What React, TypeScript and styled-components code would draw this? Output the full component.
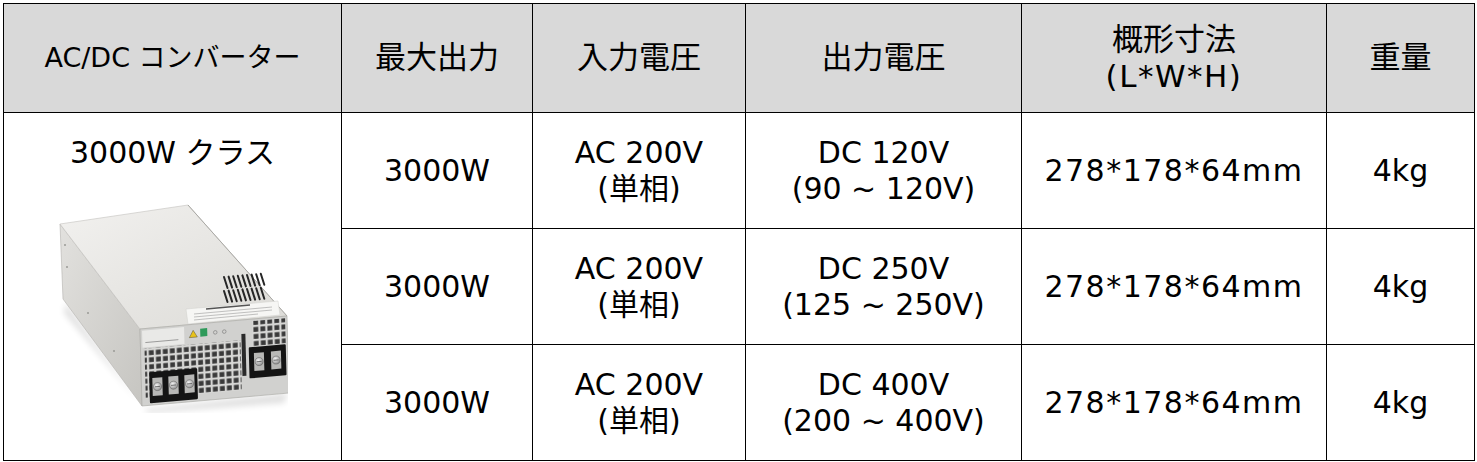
import styled, { createGlobalStyle } from 'styled-components';

const GlobalStyle = createGlobalStyle`
  html, body {
    margin: 0;
    background: #fff;
  }
  body {
    font-family: "DejaVu Sans", "Noto Sans CJK JP", sans-serif;
    color: #000;
  }
`;

const Page = styled.div`
  padding: 3px 0 0 3px;
`;

const Table = styled.table`
  border-collapse: collapse;
  table-layout: fixed;
  width: 1472px;
`;

const Col = styled.col<{ $w: number }>`
  width: ${(p) => p.$w}px;
`;

const Row = styled.tr<{ $h: number }>`
  height: ${(p) => p.$h}px;
`;

const HeadCell = styled.th<{ $size?: number }>`
  background: #d9d9d9;
  border: 1px solid #000;
  padding: 0;
  font-weight: normal;
  font-size: ${(p) => p.$size ?? 31}px;
  line-height: 1.2;
  text-align: center;
  vertical-align: middle;
`;

const Wide = styled.span`
  letter-spacing: 1.5px;
`;

const Cell = styled.td`
  border: 1px solid #000;
  padding: 0;
  font-size: 30px;
  line-height: 1.2;
  text-align: center;
  vertical-align: middle;
`;

const ProductCell = styled(Cell)`
  vertical-align: top;
  padding-top: 22px;
`;

const Caption = styled.div`
  white-space: nowrap;
`;

const ProductArt = styled.svg`
  display: block;
  margin: 32px auto 0;
`;

const vents = Array.from({ length: 9 }, (_, i) => i);

const PowerSupply = () => (
  <ProductArt width={230} height={210} viewBox="0 0 230 210">
    <defs>
      <linearGradient id="topFace" x1="0" y1="0" x2="1" y2="1">
        <stop offset="0" stopColor="#f2f1ef" />
        <stop offset="1" stopColor="#dcdbd7" />
      </linearGradient>
      <linearGradient id="sideFace" x1="0" y1="0" x2="1" y2="1">
        <stop offset="0" stopColor="#e2e1de" />
        <stop offset="1" stopColor="#c6c5c1" />
      </linearGradient>
      <radialGradient id="screw" cx="0.4" cy="0.35" r="0.7">
        <stop offset="0" stopColor="#f4f4f4" />
        <stop offset="1" stopColor="#8a8a8a" />
      </radialGradient>
      <pattern id="mesh" width="7" height="7" patternUnits="userSpaceOnUse">
        <rect width="7" height="7" fill="#d6d6d4" />
        <rect x="1.2" y="1.2" width="4.8" height="4.8" fill="#3a3a3a" />
      </pattern>
      <filter id="soft">
        <feGaussianBlur stdDeviation="3" />
      </filter>
    </defs>

    <polygon points="8,100 86,206 230,190 226,200 90,210 6,110" fill="#000" opacity="0.12" filter="url(#soft)" />

    {/* left side */}
    <polygon points="2,21 82,126 84,203 5,96" fill="url(#sideFace)" stroke="#b3b2ae" strokeWidth="0.6" />
    <circle cx="7" cy="42" r="1" fill="#9a9a96" />
    <circle cx="9" cy="64" r="1" fill="#9a9a96" />
    <circle cx="30" cy="110" r="1" fill="#9a9a96" />
    <circle cx="56" cy="148" r="1" fill="#9a9a96" />

    {/* top */}
    <polygon points="2,21 130,2 229,113 82,126" fill="url(#topFace)" stroke="#c2c1bd" strokeWidth="0.6" />
    <line x1="130" y1="2" x2="229" y2="113" stroke="#a9a8a4" strokeWidth="1" />

    {[0, 14].map((dy) =>
      vents.map((i) => (
        <line
          key={`${dy}-${i}`}
          x1={166 + i * 4.6}
          y1={74 + dy - i * 0.4}
          x2={169.5 + i * 4.6}
          y2={85 + dy - i * 0.4}
          stroke="#262626"
          strokeWidth="2"
          strokeLinecap="round"
        />
      ))
    )}

    {/* top label */}
    <polygon points="128,106 220,98 222,112 130,121" fill="#f6f6f4" stroke="#d0d0cc" strokeWidth="0.5" />
    <line x1="148" y1="106" x2="192" y2="102" stroke="#555" strokeWidth="1.6" />
    <line x1="136" y1="111" x2="214" y2="104" stroke="#9a9a9a" strokeWidth="0.6" />
    <line x1="136" y1="114" x2="214" y2="107" stroke="#9a9a9a" strokeWidth="0.6" />
    <line x1="136" y1="117" x2="200" y2="111" stroke="#9a9a9a" strokeWidth="0.6" />

    {/* front */}
    <g transform="matrix(1,-0.0884,0.026,1,82,126)">
      <rect width="147" height="77" fill="#d1d1cf" stroke="#a6a6a2" strokeWidth="0.6" />
      <rect x="2" y="2" width="42" height="17" fill="#e9e9e7" />
      <line x1="5" y1="14" x2="38" y2="14" stroke="#8a8a8a" strokeWidth="0.8" />
      <polygon points="49,13 53,6 57,13" fill="#e8c21a" stroke="#333" strokeWidth="0.4" />
      <rect x="60" y="5" width="7" height="8" fill="#2e9a5a" />
      <circle cx="75" cy="10" r="1.8" fill="none" stroke="#666" strokeWidth="0.5" />
      <circle cx="84" cy="10" r="1.8" fill="none" stroke="#666" strokeWidth="0.5" />
      <rect x="4" y="20" width="96" height="50" fill="url(#mesh)" />
      <rect x="101" y="14" width="4" height="42" fill="#2a2a2a" />
      <rect x="112" y="2" width="33" height="25" fill="url(#mesh)" />

      {/* left terminal */}
      <rect x="8" y="44" width="48" height="31" rx="1" fill="#141414" />
      {[16, 32, 48].map((x) => (
        <g key={x}>
          <rect x={x - 5} y="50" width="10" height="18" fill="#b8b8b6" />
          <circle cx={x} cy="59" r="4" fill="url(#screw)" stroke="#444" strokeWidth="0.4" />
          <line x1={x - 2.5} y1="59" x2={x + 2.5} y2="59" stroke="#555" strokeWidth="0.8" />
        </g>
      ))}

      {/* right terminal */}
      <rect x="108" y="28" width="37" height="31" rx="1" fill="#141414" />
      {[118, 135].map((x) => (
        <g key={x}>
          <rect x={x - 5} y="34" width="10" height="18" fill="#b8b8b6" />
          <circle cx={x} cy="43" r="4" fill="url(#screw)" stroke="#444" strokeWidth="0.4" />
          <line x1={x - 2.5} y1="43" x2={x + 2.5} y2="43" stroke="#555" strokeWidth="0.8" />
        </g>
      ))}
    </g>
  </ProductArt>
);

const models = [
  { out: 'DC 120V', range: '(90 ~ 120V)' },
  { out: 'DC 250V', range: '(125 ~ 250V)' },
  { out: 'DC 400V', range: '(200 ~ 400V)' },
];

const App = () => (
  <>
    <GlobalStyle />
    <Page>
      <Table>
        <colgroup>
          <Col $w={338} />
          <Col $w={191} />
          <Col $w={213} />
          <Col $w={276} />
          <Col $w={305} />
          <Col $w={148} />
        </colgroup>
        <thead>
          <Row $h={109}>
            <HeadCell $size={27}>AC/DC コンバーター</HeadCell>
            <HeadCell>最大出力</HeadCell>
            <HeadCell>入力電圧</HeadCell>
            <HeadCell>出力電圧</HeadCell>
            <HeadCell>
              概形寸法
              <br />
              <Wide>(L*W*H)</Wide>
            </HeadCell>
            <HeadCell>重量</HeadCell>
          </Row>
        </thead>
        <tbody>
          {models.map((m, i) => (
            <Row $h={116} key={m.out}>
              {i === 0 && (
                <ProductCell rowSpan={3}>
                  <Caption>3000W クラス</Caption>
                  <PowerSupply />
                </ProductCell>
              )}
              <Cell>3000W</Cell>
              <Cell>
                AC 200V
                <br />
                (単相)
              </Cell>
              <Cell>
                {m.out}
                <br />
                {m.range}
              </Cell>
              <Cell>
                <Wide>278*178*64mm</Wide>
              </Cell>
              <Cell>4kg</Cell>
            </Row>
          ))}
        </tbody>
      </Table>
    </Page>
  </>
);

export default App;
